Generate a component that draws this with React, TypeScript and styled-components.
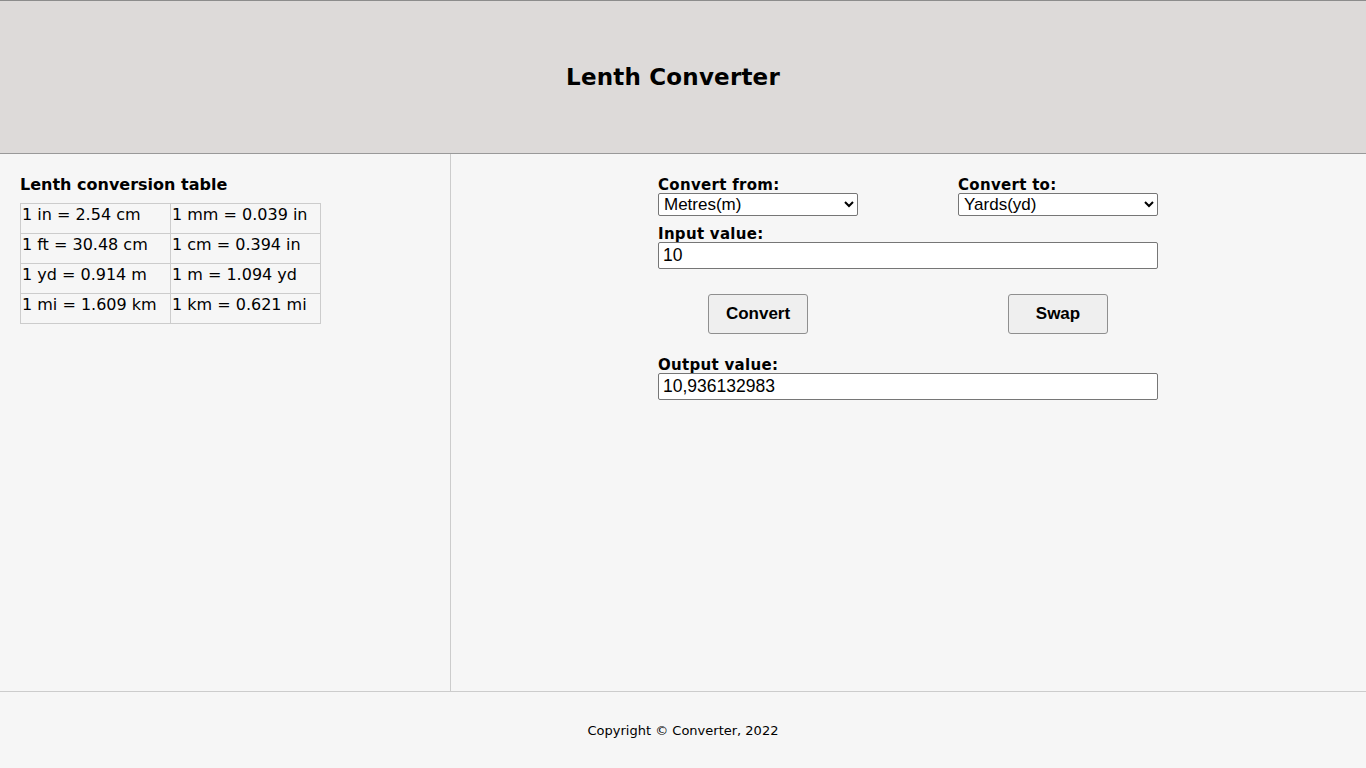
import React, { useState } from 'react';
import styled, { createGlobalStyle } from 'styled-components';

const GlobalStyle = createGlobalStyle`
  html, body {
    margin: 0;
    padding: 0;
    background: #f6f6f6;
    font-family: "DejaVu Sans", Verdana, sans-serif;
    color: #000;
  }
`;

const Page = styled.div`
  display: flex;
  flex-direction: column;
  height: 768px;
`;

const Header = styled.header`
  height: 152px;
  background: #dddad9;
  border-top: 1px solid #8c8c8c;
  border-bottom: 1px solid #999;
  display: flex;
  align-items: center;
  justify-content: center;
  padding-right: 20px;
`;

const Title = styled.h1`
  margin: 0;
  font-size: 23px;
  font-weight: 700;
  letter-spacing: 0.2px;
`;

const Main = styled.main`
  flex: 1;
  display: flex;
  border-bottom: 1px solid #ccc;
`;

const Sidebar = styled.aside`
  width: 451px;
  border-right: 1px solid #ccc;
  padding: 21px 20px 0;
  box-sizing: border-box;
`;

const SideTitle = styled.h2`
  margin: 0 0 8px;
  font-size: 16px;
  font-weight: 700;
  line-height: 20px;
`;

const Table = styled.table`
  border-collapse: collapse;
  font-size: 16px;
`;

const Cell = styled.td`
  width: 147px;
  height: 27px;
  border: 1px solid #ccc;
  padding: 2px 1px 0;
  vertical-align: top;
  line-height: 18px;
  white-space: nowrap;
`;

const Content = styled.section`
  flex: 1;
  display: flex;
  justify-content: center;
  padding: 23px 1px 0 0;
`;

const Form = styled.div`
  width: 500px;
  display: flex;
  flex-direction: column;
`;

const Row = styled.div`
  display: flex;
  justify-content: space-between;
`;

const Field = styled.div`
  display: flex;
  flex-direction: column;
`;

const Label = styled.label`
  font-weight: 700;
  font-size: 15px;
  line-height: 16px;
  letter-spacing: 0.3px;
`;

const Select = styled.select`
  width: 200px;
  height: 23px;
  box-sizing: border-box;
  font-family: "Liberation Sans", Arial, sans-serif;
  font-size: 17px;
  line-height: 19px;
  border: 1px solid #767676;
  border-radius: 2px;
  background: #fff;
  padding: 0 1px;
  color: #000;
`;

const TextInput = styled.input`
  width: 500px;
  height: 27px;
  box-sizing: border-box;
  font-family: "Liberation Sans", Arial, sans-serif;
  font-size: 17.5px;
  border: 1px solid #767676;
  border-radius: 2px;
  background: #fff;
  padding: 0 4px;
  color: #000;
`;

const ButtonRow = styled.div`
  display: flex;
  justify-content: space-between;
  padding: 0 50px;
  margin: 25px 0 23px;
`;

const Button = styled.button`
  width: 100px;
  height: 40px;
  font-family: "Liberation Sans", Arial, sans-serif;
  font-weight: 700;
  font-size: 17px;
  background: #efefef;
  border: 1px solid #8f8f8f;
  border-radius: 3px;
  color: #000;
  cursor: pointer;
`;

const Spacer = styled.div<{ $h: number }>`
  height: ${p => p.$h}px;
`;

const Footer = styled.footer`
  height: 76px;
  display: flex;
  align-items: center;
  justify-content: center;
  font-size: 13px;
`;

const rows = [
  ['1 in = 2.54 cm', '1 mm = 0.039 in'],
  ['1 ft = 30.48 cm', '1 cm = 0.394 in'],
  ['1 yd = 0.914 m', '1 m = 1.094 yd'],
  ['1 mi = 1.609 km', '1 km = 0.621 mi'],
];

const units = ['Metres(m)', 'Yards(yd)', 'Feet(ft)', 'Inches(in)', 'Miles(mi)', 'Kilometres(km)', 'Centimetres(cm)', 'Millimetres(mm)'];

const App: React.FC = () => {
  const [from, setFrom] = useState('Metres(m)');
  const [to, setTo] = useState('Yards(yd)');
  const [value, setValue] = useState('10');
  const [output, setOutput] = useState('10,936132983');

  const swap = () => {
    setFrom(to);
    setTo(from);
  };

  return (
    <Page>
      <GlobalStyle />
      <Header>
        <Title>Lenth Converter</Title>
      </Header>
      <Main>
        <Sidebar>
          <SideTitle>Lenth conversion table</SideTitle>
          <Table>
            <tbody>
              {rows.map(r => (
                <tr key={r[0]}>
                  <Cell>{r[0]}</Cell>
                  <Cell>{r[1]}</Cell>
                </tr>
              ))}
            </tbody>
          </Table>
        </Sidebar>
        <Content>
          <Form>
            <Row>
              <Field>
                <Label>Convert from:</Label>
                <Select value={from} onChange={e => setFrom(e.target.value)}>
                  {units.map(u => <option key={u}>{u}</option>)}
                </Select>
              </Field>
              <Field>
                <Label>Convert to:</Label>
                <Select value={to} onChange={e => setTo(e.target.value)}>
                  {units.map(u => <option key={u}>{u}</option>)}
                </Select>
              </Field>
            </Row>
            <Spacer $h={10} />
            <Label>Input value:</Label>
            <TextInput value={value} onChange={e => setValue(e.target.value)} />
            <ButtonRow>
              <Button onClick={() => setOutput(output)}>Convert</Button>
              <Button onClick={swap}>Swap</Button>
            </ButtonRow>
            <Label>Output value:</Label>
            <TextInput value={output} readOnly />
          </Form>
        </Content>
      </Main>
      <Footer>Copyright © Converter, 2022</Footer>
    </Page>
  );
};

export default App;
